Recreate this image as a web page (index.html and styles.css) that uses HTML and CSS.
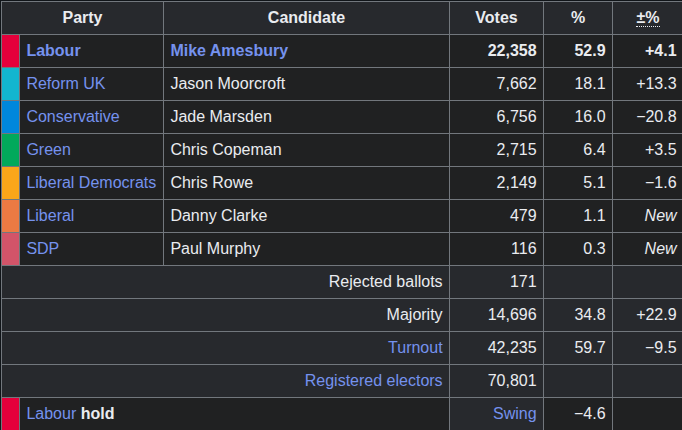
FILE: index.html
```html
<!DOCTYPE html>
<html lang="en">
<head>
<meta charset="utf-8">
<title>Election result</title>
<link rel="stylesheet" href="styles.css">
</head>
<body>
<table class="results">
  <colgroup>
    <col class="c-bar"><col class="c-party"><col class="c-cand"><col class="c-votes"><col class="c-pct"><col class="c-chg">
  </colgroup>
  <thead>
    <tr>
      <th colspan="2">Party</th>
      <th>Candidate</th>
      <th>Votes</th>
      <th>%</th>
      <th><abbr class="abbr" title="Change">±%</abbr></th>
    </tr>
  </thead>
  <tbody>
    <tr class="winner">
      <td class="bar lab"></td>
      <td class="link">Labour</td>
      <td class="link">Mike Amesbury</td>
      <td class="num">22,358</td>
      <td class="num">52.9</td>
      <td class="num">+4.1</td>
    </tr>
    <tr>
      <td class="bar ref"></td>
      <td class="link">Reform UK</td>
      <td>Jason Moorcroft</td>
      <td class="num">7,662</td>
      <td class="num">18.1</td>
      <td class="num">+13.3</td>
    </tr>
    <tr>
      <td class="bar con"></td>
      <td class="link">Conservative</td>
      <td>Jade Marsden</td>
      <td class="num">6,756</td>
      <td class="num">16.0</td>
      <td class="num">−20.8</td>
    </tr>
    <tr>
      <td class="bar grn"></td>
      <td class="link">Green</td>
      <td>Chris Copeman</td>
      <td class="num">2,715</td>
      <td class="num">6.4</td>
      <td class="num">+3.5</td>
    </tr>
    <tr>
      <td class="bar ld"></td>
      <td class="link">Liberal Democrats</td>
      <td>Chris Rowe</td>
      <td class="num">2,149</td>
      <td class="num">5.1</td>
      <td class="num">−1.6</td>
    </tr>
    <tr>
      <td class="bar lib"></td>
      <td class="link">Liberal</td>
      <td>Danny Clarke</td>
      <td class="num">479</td>
      <td class="num">1.1</td>
      <td class="num new">New</td>
    </tr>
    <tr>
      <td class="bar sdp"></td>
      <td class="link">SDP</td>
      <td>Paul Murphy</td>
      <td class="num">116</td>
      <td class="num">0.3</td>
      <td class="num new">New</td>
    </tr>
    <tr class="summary">
      <td colspan="3" class="num">Rejected ballots</td>
      <td class="num">171</td>
      <td></td>
      <td></td>
    </tr>
    <tr class="summary">
      <td colspan="3" class="num">Majority</td>
      <td class="num">14,696</td>
      <td class="num">34.8</td>
      <td class="num">+22.9</td>
    </tr>
    <tr class="summary">
      <td colspan="3" class="num link">Turnout</td>
      <td class="num">42,235</td>
      <td class="num">59.7</td>
      <td class="num">−9.5</td>
    </tr>
    <tr class="summary">
      <td colspan="3" class="num link">Registered electors</td>
      <td class="num">70,801</td>
      <td></td>
      <td></td>
    </tr>
    <tr>
      <td class="bar lab"></td>
      <td colspan="2"><span class="link">Labour</span> <b class="hold">hold</b></td>
      <td class="num link lite">Swing</td>
      <td class="num">−4.6</td>
      <td></td>
    </tr>
  </tbody>
</table>
</body>
</html>
```
FILE: styles.css
```css
html, body {
  margin: 0;
  padding: 0;
  background: #101418;
}
body {
  padding: 1px 0 0 1px;
  font-family: "Liberation Sans", Arial, sans-serif;
  font-size: 16px;
  color: #eaecf0;
  overflow: hidden;
}
.results {
  border-collapse: collapse;
  table-layout: fixed;
  width: 682px;
  background: #202122;
  border: 1px solid #72777d;
}
.c-bar { width: 18px; }
.c-party { width: 144px; }
.c-cand { width: 286px; }
.c-votes { width: 94px; }
.c-pct { width: 69px; }
.c-chg { width: 71px; }
.results th,
.results td {
  border: 1px solid #72777d;
  height: 33px;
  box-sizing: border-box;
  padding: 0 6.4px;
  line-height: 22px;
  white-space: nowrap;
  vertical-align: middle;
}
.results th {
  background: #27292d;
  font-weight: bold;
  text-align: center;
}
.abbr {
  text-decoration: none;
  border-bottom: 1px dotted #eaecf0;
}
.winner td { font-weight: bold; }
.link { color: #7592ee; }
.num { text-align: right; }
.new { font-style: italic; }
.summary td { background: #27292d; }
.lite { background: #27292d; }
.hold { color: #eaecf0; }
.bar { padding: 0; }
.lab { background: #e4003b; }
.ref { background: #12b6cf; }
.con { background: #0087dc; }
.grn { background: #02a95b; }
.ld { background: #faa61a; }
.lib { background: #eb7a43; }
.sdp { background: #d25469; }
```
